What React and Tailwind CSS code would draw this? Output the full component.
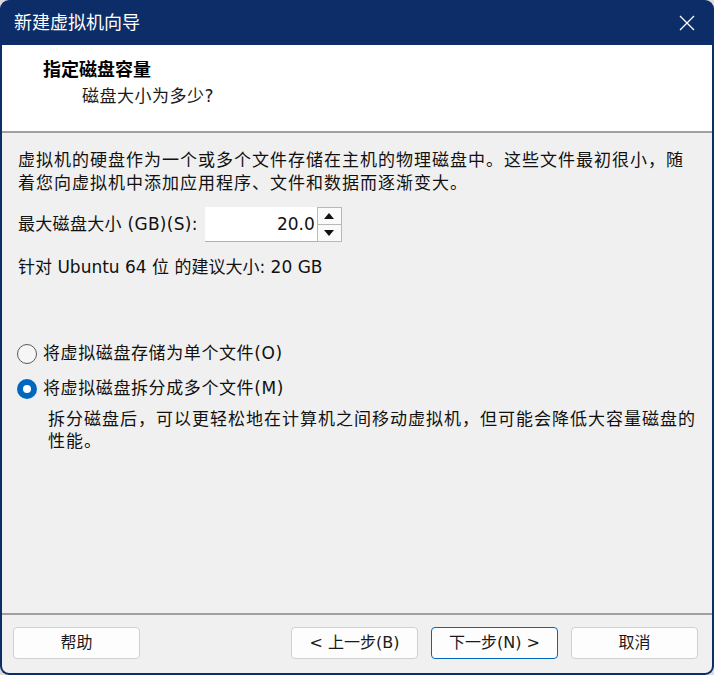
import React, { useState } from "react";

const font = { fontFamily: '"DejaVu Sans", "Noto Sans CJK SC", sans-serif' };

const Radio = ({ checked, label, onClick }) => (
  <div className="flex items-center h-[24px] cursor-default" onClick={onClick}>
    {checked ? (
      <span className="w-[20px] h-[20px] rounded-full bg-[#0067c0] flex items-center justify-center ml-[17px]">
        <span className="w-[8px] h-[8px] rounded-full bg-white"></span>
      </span>
    ) : (
      <span className="w-[20px] h-[20px] rounded-full border border-[#5a5a5a] bg-[#f6f6f6] ml-[17px]"></span>
    )}
    <span className="ml-[6px] tracking-[0.6px]">{label}</span>
  </div>
);

const Btn = ({ children, primary }) => (
  <button
    className={
      "w-[127px] h-[32px] rounded-[4px] bg-[#fdfdfd] text-[16px] text-[#1a1a1a] " +
      (primary ? "border border-[#0067c0]" : "border border-[#d0d0d0]")
    }
  >
    {children}
  </button>
);

const App = () => {
  const [split, setSplit] = useState(true);

  return (
    <div className="w-[714px] h-[675px] bg-[#dcdcdc]" style={font}>
      <div className="w-full h-full rounded-[9px] bg-[#0c2d67] px-[2px] pb-[2px] flex flex-col overflow-hidden">
        {/* title bar */}
        <div className="h-[45px] flex items-center justify-between pl-[12px] pr-[12px] shrink-0">
          <span className="text-white text-[18px] leading-none">新建虚拟机向导</span>
          <svg width="16" height="16" viewBox="0 0 16 16" className="mr-[5px]">
            <path d="M1 1 L15 15 M15 1 L1 15" stroke="white" strokeWidth="1.3" fill="none" />
          </svg>
        </div>

        <div className="flex-1 flex flex-col bg-[#f0f0f0] rounded-b-[7px] overflow-hidden">
          {/* header */}
          <div className="h-[88px] bg-white border-b-2 border-[#a0a0a0] shrink-0 pt-[12px]">
            <div className="pl-[41px] font-bold text-[18px] leading-[26px] text-black">指定磁盘容量</div>
            <div className="pl-[80px] text-[17px] leading-[27px] text-[#1a1a1a] tracking-[0.5px]">磁盘大小为多少?</div>
          </div>

          {/* content */}
          <div className="flex-1 text-[17px] text-[#111] pt-[16px]">
            <p className="px-[16px] leading-[23px] tracking-[1px] whitespace-nowrap">
              虚拟机的硬盘作为一个或多个文件存储在主机的物理磁盘中。这些文件最初很小，随
              <br />
              着您向虚拟机中添加应用程序、文件和数据而逐渐变大。
            </p>

            <div className="flex items-center pl-[16px] mt-[12px]">
              <span className="tracking-[0.3px]">最大磁盘大小 (GB)(S):</span>
              <div className="flex ml-[7px]">
                <input
                  defaultValue="20.0"
                  className="w-[112px] h-[35px] bg-white text-right pr-[2px] text-[17px] outline-none border-b border-[#b0b0b0]"
                />
                <div className="flex flex-col w-[25px] h-[35px] border border-[#b8b8b8] bg-[#f0f0f0]">
                  <div className="flex-1 flex items-center justify-center border-b border-[#b8b8b8] bg-[#fafafa]">
                    <svg width="10" height="6" viewBox="0 0 10 6"><path d="M5 0 L10 6 L0 6 Z" fill="#111" /></svg>
                  </div>
                  <div className="flex-1 flex items-center justify-center bg-[#fafafa]">
                    <svg width="10" height="6" viewBox="0 0 10 6"><path d="M0 0 L10 0 L5 6 Z" fill="#111" /></svg>
                  </div>
                </div>
              </div>
            </div>

            <div className="pl-[16px] mt-[13px] leading-[24px]">针对 Ubuntu 64 位 的建议大小: 20 GB</div>

            <div className="mt-[63px] flex flex-col gap-[11px] -ml-[2px]">
              <Radio checked={!split} label="将虚拟磁盘存储为单个文件(O)" onClick={() => setSplit(false)} />
              <Radio checked={split} label="将虚拟磁盘拆分成多个文件(M)" onClick={() => setSplit(true)} />
            </div>

            <p className="pl-[46px] pr-[10px] mt-[7px] leading-[22px] tracking-[1px] whitespace-nowrap">
              拆分磁盘后，可以更轻松地在计算机之间移动虚拟机，但可能会降低大容量磁盘的
              <br />
              性能。
            </p>
          </div>

          {/* footer */}
          <div className="h-[60px] border-t-2 border-[#a0a0a0] shrink-0 flex items-start pt-[12px] pl-[11px] pr-[14px]">
            <Btn>帮助</Btn>
            <div className="flex-1"></div>
            <div className="flex gap-[13px]">
              <Btn>&lt; 上一步(B)</Btn>
              <Btn primary>下一步(N) &gt;</Btn>
              <Btn>取消</Btn>
            </div>
          </div>
        </div>
      </div>
    </div>
  );
};

export default App;
